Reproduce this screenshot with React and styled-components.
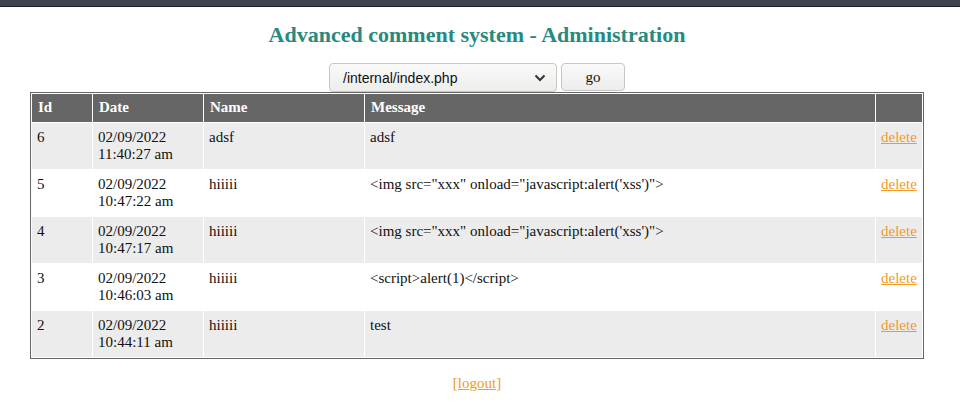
import styled, { createGlobalStyle } from "styled-components";

const GlobalStyle = createGlobalStyle`
  html, body {
    margin: 0;
    padding: 0;
    background: #fff;
  }
  body {
    font-family: "Liberation Serif", "Times New Roman", serif;
    font-size: 15px;
    color: #111;
  }
`;

const TopBar = styled.div`
  height: 6px;
  background: #40434b;
  border-bottom: 1px solid #1e1f23;
`;

const Page = styled.div`
  width: 954px;
  display: flex;
  flex-direction: column;
  align-items: center;
`;

const Title = styled.h2`
  margin: 15px 0 15px;
  font-size: 22px;
  font-weight: bold;
  color: #268a80;
`;

const PickForm = styled.form`
  display: flex;
  gap: 4px;
  margin: 0;
`;

const FileSelect = styled.div`
  box-sizing: border-box;
  width: 228px;
  height: 29px;
  display: flex;
  align-items: center;
  justify-content: space-between;
  padding: 0 10px 0 13px;
  border: 1px solid #c9c6c1;
  border-radius: 4px;
  background: linear-gradient(#fafafa, #ededec);
  font-family: "Liberation Sans", Arial, sans-serif;
  font-size: 14px;
  color: #111;
`;

const GoButton = styled.button`
  box-sizing: border-box;
  width: 64px;
  height: 28px;
  border: 1px solid #c9c6c1;
  border-radius: 4px;
  background: linear-gradient(#fafafa, #ededec);
  font-family: "Liberation Serif", serif;
  font-size: 15px;
  color: #111;
  padding: 0;
`;

const Table = styled.table`
  width: 894px;
  table-layout: fixed;
  border: 1px solid #666;
  border-spacing: 1px;
  background: #fff;
  font-size: 15px;
`;

const Col = styled.col`
  width: ${({ $w }) => $w || "auto"};
`;

const HeadCell = styled.th`
  background: #666;
  color: #fff;
  font-weight: bold;
  text-align: left;
  padding: 5px 6px 6px;
  line-height: 17px;
`;

const Row = styled.tr`
  background: ${({ $odd }) => ($odd ? "#ececec" : "#fff")};
`;

const Cell = styled.td`
  vertical-align: top;
  padding: 6px 4px 6px 5px;
  line-height: 17px;
  height: 34px;
`;

const Link = styled.a`
  color: #f29a26;
  text-decoration: underline;
`;

const Footer = styled.p`
  margin: 16px 0;
  color: #f29a26;
`;

const Chevron = () => (
  <svg width="12" height="8" viewBox="0 0 12 8">
    <path d="M1.5 1.5 L6 6 L10.5 1.5" fill="none" stroke="#333" strokeWidth="2" />
  </svg>
);

const comments = [
  { id: 6, date: "02/09/2022", time: "11:40:27 am", name: "adsf", msg: "adsf" },
  { id: 5, date: "02/09/2022", time: "10:47:22 am", name: "hiiiii", msg: `<img src="xxx" onload="javascript:alert('xss')">` },
  { id: 4, date: "02/09/2022", time: "10:47:17 am", name: "hiiiii", msg: `<img src="xxx" onload="javascript:alert('xss')">` },
  { id: 3, date: "02/09/2022", time: "10:46:03 am", name: "hiiiii", msg: "<script>alert(1)</script>" },
  { id: 2, date: "02/09/2022", time: "10:44:11 am", name: "hiiiii", msg: "test" },
];

export default function App() {
  return (
    <>
      <GlobalStyle />
      <TopBar />
      <Page>
        <Title>Advanced comment system - Administration</Title>
        <PickForm onSubmit={(e) => e.preventDefault()}>
          <FileSelect>
            <span>/internal/index.php</span>
            <Chevron />
          </FileSelect>
          <GoButton type="submit">go</GoButton>
        </PickForm>
        <Table>
          <colgroup>
            <Col $w="60px" />
            <Col $w="110px" />
            <Col $w="160px" />
            <Col />
            <Col $w="46px" />
          </colgroup>
          <thead>
            <tr>
              <HeadCell>Id</HeadCell>
              <HeadCell>Date</HeadCell>
              <HeadCell>Name</HeadCell>
              <HeadCell>Message</HeadCell>
              <HeadCell></HeadCell>
            </tr>
          </thead>
          <tbody>
            {comments.map((c, i) => (
              <Row key={c.id} $odd={i % 2 === 0}>
                <Cell>{c.id}</Cell>
                <Cell>
                  {c.date}
                  <br />
                  {c.time}
                </Cell>
                <Cell>{c.name}</Cell>
                <Cell>{c.msg}</Cell>
                <Cell>
                  <Link href="#">delete</Link>
                </Cell>
              </Row>
            ))}
          </tbody>
        </Table>
        <Footer>
          [<Link href="#">logout</Link>]
        </Footer>
      </Page>
    </>
  );
}
